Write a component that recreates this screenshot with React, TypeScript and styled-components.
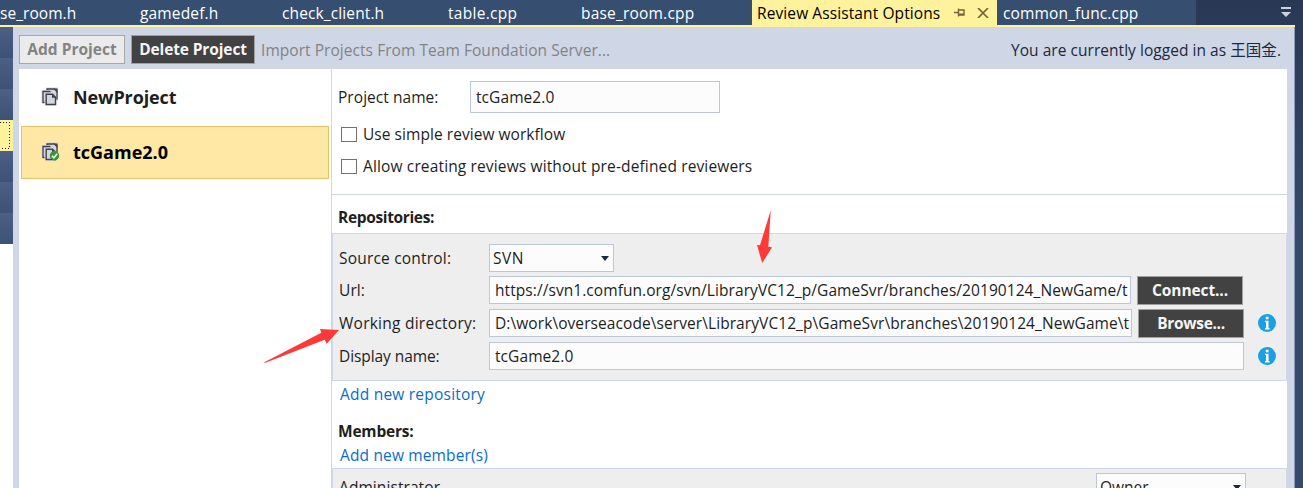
import React from "react";
import styled, { createGlobalStyle } from "styled-components";

const GlobalStyle = createGlobalStyle`
  * { box-sizing: border-box; }
  html, body { margin: 0; overflow: hidden; background: #fff; }
  body { font-family: "Open Sans", "Noto Sans CJK SC", sans-serif; font-size: 15.5px; line-height: 20px; color: #1e1e1e; }
`;

const Window = styled.div`
  position: relative;
  width: 1303px;
  height: 488px;
  overflow: hidden;
  display: flex;
  background: linear-gradient(#293955, #35496a 50%, #35496a);
`;
const Main = styled.div`
  width: 1295px;
  display: flex;
  flex-direction: column;
`;
const Label = styled.span<{ $ls?: number; $bold?: boolean }>`
  white-space: pre;
  letter-spacing: ${(p) => p.$ls ?? 0}px;
  font-weight: ${(p) => (p.$bold ? 700 : 400)};
`;

/* document tabs */
const TabBar = styled.div`
  height: 27px;
  display: flex;
  border-bottom: 2px solid #fff29d;
`;
const Tab = styled.div<{ $w: number; $active?: boolean; $pad?: number }>`
  width: ${(p) => p.$w}px;
  height: ${(p) => (p.$active ? 27 : 25)}px;
  flex: none;
  display: flex;
  align-items: flex-start;
  padding: 3px 0 0 ${(p) => p.$pad ?? 0}px;
  background: ${(p) => (p.$active ? "#fff29d" : "#364e6f")};
  color: ${(p) => (p.$active ? "#000" : "#fff")};
`;
const TabIcon = styled.svg<{ $ml: number; $mt: number }>`
  flex: none;
  margin: ${(p) => p.$mt}px 0 0 ${(p) => p.$ml}px;
`;
const Overflow = styled.div`
  flex: 1;
  height: 25px;
  display: flex;
  justify-content: flex-end;
  padding: 7px 4px 0 0;
`;

const Body = styled.div`
  flex: 1;
  min-height: 0;
  display: flex;
`;
const Rail = styled.div`
  width: 13px;
  background: #fff;
`;
const RailItem = styled.div<{ $active?: boolean }>`
  height: 31px;
  display: flex;
  align-items: center;
  background: ${(p) => (p.$active ? "#fff29d" : "linear-gradient(#4c5f85, #3d5277)")};
`;
const FocusRect = styled.svg`
  display: block;
`;
const Panel = styled.div`
  flex: 1;
  min-width: 0;
  display: flex;
  flex-direction: column;
  padding: 0 7px 0 6px;
  background: #cfd6e5;
  border-right: 1px solid #8e9bbc;
`;
const Toolbar = styled.div`
  height: 42px;
  flex: none;
  display: flex;
  align-items: flex-start;
  gap: 6px;
  padding: 8px 6px 0 0;
`;
const Button = styled.div<{ $w: number; $disabled?: boolean }>`
  width: ${(p) => p.$w}px;
  height: 29px;
  flex: none;
  display: flex;
  justify-content: center;
  border: 1px solid ${(p) => (p.$disabled ? "#a8a8a8" : "#a0a0a0")};
  background: ${(p) => (p.$disabled ? "#ebebeb" : "#424242")};
  color: ${(p) => (p.$disabled ? "#838383" : "#f5f5f5")};
  line-height: 27px;
`;
const ToolText = styled.div<{ $muted?: boolean }>`
  padding-top: 5px;
  margin-left: ${(p) => (p.$muted ? "0" : "auto")};
  color: ${(p) => (p.$muted ? "#838383" : "#1b293e")};
`;

const Content = styled.div`
  flex: 1;
  min-height: 0;
  display: flex;
  background: #fff;
`;
const ProjectList = styled.div`
  width: 313px;
  flex: none;
  display: flex;
  flex-direction: column;
  gap: 2px;
  padding: 2px 2px 0;
  border-right: 1px solid #cfd6e5;
`;
const ProjectItem = styled.div<{ $selected?: boolean }>`
  height: 53px;
  display: flex;
  align-items: center;
  gap: 13px;
  padding: 0 0 2px 19px;
  font-size: 18px;
  color: ${(p) => (p.$selected ? "#000" : "#1e1e1e")};
  border: 1px solid ${(p) => (p.$selected ? "#e5c365" : "#fff")};
  background: ${(p) => (p.$selected ? "#ffe8a6" : "#fff")};
`;

const Details = styled.div`
  flex: 1;
  min-width: 0;
  display: flex;
  flex-direction: column;
`;
const General = styled.div`
  height: 126px;
  flex: none;
  padding: 12px 0 0 6px;
  border-bottom: 1px solid #cfd6e5;
`;
const NameRow = styled.div`
  display: flex;
  align-items: center;
  height: 32px;
`;
const FieldLabel = styled.div<{ $w: number }>`
  width: ${(p) => p.$w}px;
  flex: none;
`;
const Input = styled.div<{ $w: number; $h?: number }>`
  width: ${(p) => p.$w}px;
  height: ${(p) => p.$h ?? 28}px;
  line-height: ${(p) => (p.$h ?? 28) - 2}px;
  flex: none;
  overflow: hidden;
  padding-left: 5px;
  border: 1px solid #bcc6dc;
  background: #fcfcfc;
`;
const CheckRow = styled.div<{ $mt: number }>`
  display: flex;
  align-items: center;
  height: 20px;
  margin-top: ${(p) => p.$mt}px;
  padding-left: 3px;
  gap: 6px;
`;
const CheckBox = styled.div`
  width: 16px;
  height: 15px;
  border: 1px solid #717171;
  background: #fefefe;
`;
const SectionTitle = styled.div<{ $mt: number }>`
  height: 20px;
  flex: none;
  margin-top: ${(p) => p.$mt}px;
  padding-left: 6px;
`;
const GreyBox = styled.div<{ $h: number; $mt: number; $pt: number }>`
  height: ${(p) => p.$h}px;
  flex: none;
  margin: ${(p) => p.$mt}px 0 0;
  padding: ${(p) => p.$pt}px 0 0 6px;
  border: 1px solid #cfd6e5;
  background: #eee;
`;
const FieldRow = styled.div<{ $mb: number }>`
  display: flex;
  align-items: center;
  height: 28px;
  margin-bottom: ${(p) => p.$mb}px;
`;
const ButtonSlot = styled.div`
  height: 28px;
  margin: 0 0 0 6px;
`;
const InfoIcon = styled.svg`
  flex: none;
  margin-left: 14px;
`;
const Select = styled.div<{ $w: number }>`
  width: ${(p) => p.$w}px;
  height: 28px;
  flex: none;
  display: flex;
  align-items: center;
  justify-content: space-between;
  padding: 0 4px 0 3px;
  border: 1px solid #bcc6dc;
  background: #fcfcfc;
`;
const Link = styled.div<{ $mt: number }>`
  height: 20px;
  flex: none;
  margin-top: ${(p) => p.$mt}px;
  padding-left: 8px;
  color: #0a6cce;
`;
const MemberRow = styled.div`
  display: flex;
  align-items: center;
  justify-content: space-between;
  height: 28px;
  padding-right: 40px;
`;
const Arrows = styled.svg`
  position: absolute;
  left: 0;
  top: 0;
`;

const Pages = ({ checked }: { checked?: boolean }) => (
  <svg width="19" height="20" viewBox="0 0 19 20">
    <path d="M5 0.500H17V13.500H15.500V18.500H4V16H0.500V3H5z" fill="#d3d6e2" />
    <path d="M6 3V2H13.500L16 4.500V12.500" fill="none" stroke="#424248" strokeWidth="1.300" />
    <path d="M12.500 1.400H16.600V6z" fill="#424248" />
    <path d="M3.500 15.500H2V4.500H9.500" fill="none" stroke="#424248" strokeWidth="1.300" />
    <path d="M5.200 7.200H11.500L14.500 10.200V17.500H5.200z" fill="#d3d6e2" stroke="#424248" strokeWidth="1.400" />
    <path d="M11 7v3.800h3.800z" fill="#424248" />
    {checked && (
      <>
        <circle cx="13.500" cy="13.800" r="4.700" fill="#339933" />
        <path d="M10.900 13.800l2 2 3.300-4" fill="none" stroke="#fff" strokeWidth="1.600" />
      </>
    )}
  </svg>
);

const Info = () => (
  <InfoIcon width="18" height="18" viewBox="0 0 18 18">
    <circle cx="9" cy="9" r="9" fill="#1ba1e2" />
    <path d="M7.800 2.800H10.500V5.300H7.800zM7 6.700H10.500V14H11.500V15.400H7V14H8V8.100H7z" fill="#fff" />
  </InfoIcon>
);

const Caret = () => (
  <svg width="8" height="5" viewBox="0 0 8 5">
    <path d="M0 0h8L4 5z" fill="#1b293e" />
  </svg>
);

const tabs = [
  { text: "se_room.h", w: 140, ls: 0.05 },
  { text: "gamedef.h", w: 142, ls: 0.15 },
  { text: "check_client.h", w: 166, ls: 0.12 },
  { text: "table.cpp", w: 133, ls: 0.3 },
  { text: "base_room.cpp", w: 171, ls: 0.2 },
];

export default function App() {
  return (
    <Window>
      <GlobalStyle />
      <Main>
        <TabBar>
          {tabs.map((t) => (
            <Tab key={t.text} $w={t.w}>
              <Label $ls={t.ls}>{t.text}</Label>
            </Tab>
          ))}
          <Tab $w={245} $active $pad={5}>
            <Label $ls={0.1}>Review Assistant Options</Label>
            <TabIcon $ml={14} $mt={5} width="12" height="10" viewBox="0 0 12 10">
              <path d="M0 4.500h4M4.500 0.500v8M4.500 2h5.500v5H4.500M4.500 6.200H10" fill="none" stroke="#75633d" strokeWidth="1.400" />
            </TabIcon>
            <TabIcon $ml={11} $mt={5} width="12" height="10" viewBox="0 0 12 10">
              <path d="M1 0l10 10M11 0L1 10" stroke="#75633d" strokeWidth="1.700" />
            </TabIcon>
          </Tab>
          <Tab $w={199} $pad={6}>
            <Label $ls={0.15}>common_func.cpp</Label>
          </Tab>
          <Overflow>
            <svg width="10" height="10" viewBox="0 0 10 10">
              <path d="M0 0h10v2H0zM0 5h10L5 10z" fill="#ced4dd" />
            </svg>
          </Overflow>
        </TabBar>
        <Body>
          <Rail>
            {[0, 1, 2, 3, 4, 5, 6].map((i) => (
              <RailItem key={i} $active={i === 3}>
                {i === 3 && (
                  <FocusRect width="11" height="27" viewBox="0 0 11 27">
                    <path d="M0 .5h9.500v26H0" fill="none" stroke="#222" strokeDasharray="1 2" />
                  </FocusRect>
                )}
              </RailItem>
            ))}
          </Rail>
          <Panel>
            <Toolbar>
              <Button $w={106} $disabled>
                <Label $bold $ls={0.02}>Add Project</Label>
              </Button>
              <Button $w={124}>
                <Label $bold $ls={-0.12}>Delete Project</Label>
              </Button>
              <ToolText $muted>
                <Label $ls={0.05}>Import Projects From Team Foundation Server...</Label>
              </ToolText>
              <ToolText>
                <Label $ls={0.04}>You are currently logged in as 王国金.</Label>
              </ToolText>
            </Toolbar>
            <Content>
              <ProjectList>
                <ProjectItem>
                  <Pages />
                  <Label $bold $ls={-0.1}>NewProject</Label>
                </ProjectItem>
                <ProjectItem $selected>
                  <Pages checked />
                  <Label $bold>tcGame2.0</Label>
                </ProjectItem>
              </ProjectList>
              <Details>
                <General>
                  <NameRow>
                    <FieldLabel $w={132}>
                      <Label $ls={0.05}>Project name:</Label>
                    </FieldLabel>
                    <Input $w={250} $h={32}>
                      <Label $ls={0.08}>tcGame2.0</Label>
                    </Input>
                  </NameRow>
                  <CheckRow $mt={11}>
                    <CheckBox />
                    <Label $ls={0.05}>Use simple review workflow</Label>
                  </CheckRow>
                  <CheckRow $mt={12}>
                    <CheckBox />
                    <Label $ls={0.14}>Allow creating reviews without pre-defined reviewers</Label>
                  </CheckRow>
                </General>
                <SectionTitle $mt={12}>
                  <Label $bold $ls={-0.35}>Repositories:</Label>
                </SectionTitle>
                <GreyBox $mt={6} $h={148} $pt={10}>
                  <FieldRow $mb={4}>
                    <FieldLabel $w={150}>
                      <Label $ls={0.2}>Source control:</Label>
                    </FieldLabel>
                    <Select $w={125}>
                      <Label $ls={0.5}>SVN</Label>
                      <Caret />
                    </Select>
                  </FieldRow>
                  <FieldRow $mb={5}>
                    <FieldLabel $w={150}>
                      <Label $ls={0.1}>Url:</Label>
                    </FieldLabel>
                    <Input $w={642}>
                      <Label $ls={0.07}>https://svn1.comfun.org/svn/LibraryVC12_p/GameSvr/branches/20190124_NewGame/t</Label>
                    </Input>
                    <ButtonSlot>
                      <Button $w={106}>
                        <Label $bold $ls={-0.1}>Connect...</Label>
                      </Button>
                    </ButtonSlot>
                  </FieldRow>
                  <FieldRow $mb={5}>
                    <FieldLabel $w={150}>
                      <Label $ls={0.25}>Working directory:</Label>
                    </FieldLabel>
                    <Input $w={643}>
                      <Label $ls={0.08}>{"D:\\work\\overseacode\\server\\LibraryVC12_p\\GameSvr\\branches\\20190124_NewGame\\t"}</Label>
                    </Input>
                    <ButtonSlot>
                      <Button $w={106}>
                        <Label $bold $ls={-0.3}>Browse...</Label>
                      </Button>
                    </ButtonSlot>
                    <Info />
                  </FieldRow>
                  <FieldRow $mb={0}>
                    <FieldLabel $w={150}>
                      <Label $ls={-0.08}>Display name:</Label>
                    </FieldLabel>
                    <Input $w={755}>
                      <Label $ls={0.08}>tcGame2.0</Label>
                    </Input>
                    <Info />
                  </FieldRow>
                </GreyBox>
                <Link $mt={3}>
                  <Label $ls={0.22}>Add new repository</Label>
                </Link>
                <SectionTitle $mt={17}>
                  <Label $bold $ls={-0.2}>Members:</Label>
                </SectionTitle>
                <Link $mt={4}>
                  <Label $ls={0.15}>Add new member(s)</Label>
                </Link>
                <GreyBox $mt={3} $h={60} $pt={4}>
                  <MemberRow>
                    <Label $ls={0.08}>Administrator</Label>
                    <Select $w={150}>
                      <Label>Owner</Label>
                      <Caret />
                    </Select>
                  </MemberRow>
                </GreyBox>
              </Details>
            </Content>
          </Panel>
        </Body>
      </Main>
      <Arrows width="1303" height="488" viewBox="0 0 1303 488">
        <g fill="#fd3a37">
          <path d="M770.800 210L768.300 246.700L772 247.300L762.200 263L757 245L760 245.300Z" />
          <path d="M264.300 362.300L321.300 332.700L320 329L339 330L326.700 343.700L324.700 339.700L264.800 363Z" />
        </g>
      </Arrows>
    </Window>
  );
}
